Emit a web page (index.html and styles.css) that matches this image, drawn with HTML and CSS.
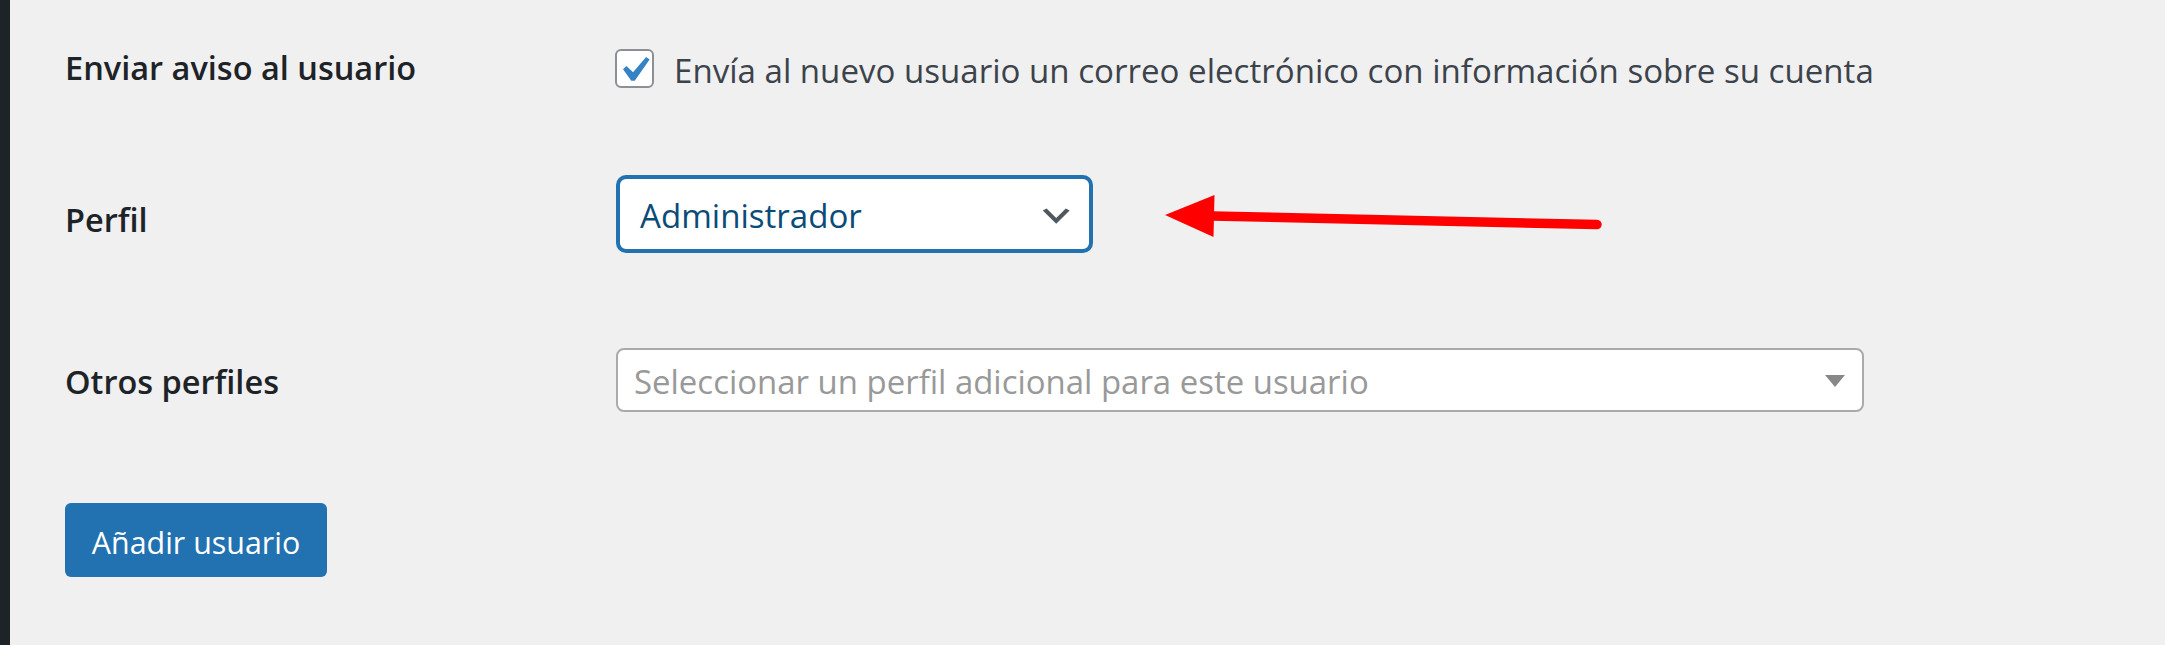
FILE: index.html
```html
<!DOCTYPE html>
<html lang="es">
<head>
<meta charset="utf-8">
<title>Añadir usuario</title>
<link rel="stylesheet" href="styles.css">
</head>
<body>
<div class="layout">
  <aside class="adminmenu"></aside>
  <main class="content">
    <form class="user-form">
      <div class="row row-notify">
        <div class="label">Enviar aviso al usuario</div>
        <div class="field field-check">
          <span class="checkbox"><svg class="checkmark" viewBox="5.78 4.89 10.39 9.32" width="26.6" height="23.9"><path d="M14.83 4.89l1.34.94-5.81 8.38H9.02L5.78 9.67l1.34-1.25 2.57 2.4z" fill="#3582c4"/></svg></span>
          <span class="check-text">Envía al nuevo usuario un correo electrónico con información sobre su cuenta</span>
        </div>
      </div>
      <div class="row row-role">
        <div class="label">Perfil</div>
        <div class="field">
          <div class="select"><span class="select-value">Administrador</span><svg class="chevron" viewBox="0 0 20 20" width="38.4" height="38.4"><path d="M5 6l5 5 5-5 2 1-7 7-7-7 2-1z" fill="#50575e"/></svg></div>
        </div>
      </div>
      <div class="row row-roles">
        <div class="label">Otros perfiles</div>
        <div class="field">
          <div class="select2"><span class="placeholder">Seleccionar un perfil adicional para este usuario</span><span class="select2-arrow"></span></div>
        </div>
      </div>
      <div class="submit"><button type="button" class="button-primary">Añadir usuario</button></div>
    </form>
  </main>
</div>
<svg class="annotation" viewBox="0 0 2165 645" width="2165" height="645">
  <line x1="1212" y1="216" x2="1597" y2="224.5" stroke="#ff0000" stroke-width="9.5" stroke-linecap="round"/>
  <polygon points="1165,215 1214.5,195 1213.5,237" fill="#ff0000"/>
</svg>
</body>
</html>
```

FILE: styles.css
```css
html, body {
  margin: 0;
  height: 100%;
}

body {
  background: #f0f0f1;
  font-family: "Open Sans", "Noto Sans", sans-serif;
  color: #3c434a;
  overflow: hidden;
}

.layout {
  display: flex;
  min-height: 645px;
}

.adminmenu {
  width: 10px;
  flex: none;
  background: #1d2327;
}

.content {
  flex: 1;
  padding: 49px 0 0 55px;
}

.row {
  display: flex;
  align-items: flex-start;
}

.label {
  width: 551px;
  flex: none;
  font-size: 32.5px;
  font-weight: 600;
  line-height: 40px;
  color: #1d2327;
}

.row-notify .label {
  margin-top: -1px;
}

.field-check {
  display: flex;
  align-items: flex-start;
  gap: 20px;
}

.checkbox {
  width: 39px;
  height: 39px;
  box-sizing: border-box;
  flex: none;
  border: 2px solid #8c8f94;
  border-radius: 6px;
  background: #fff;
  padding: 5.7px 0 0 6px;
  margin-left: -1px;
}

.checkmark {
  display: block;
}

.check-text {
  margin-top: 2px;
  font-size: 33.1px;
  line-height: 40px;
  white-space: nowrap;
}

.row-role {
  padding-top: 84px;
}

.row-role .label {
  margin-top: 24.5px;
}

.select {
  width: 477px;
  height: 78px;
  box-sizing: border-box;
  display: flex;
  align-items: center;
  padding: 7px 14px 3px 20px;
  border: 4px solid #2271b1;
  border-radius: 10px;
  background: #fff;
}

.select-value {
  font-size: 33.1px;
  line-height: 60px;
  color: #0a4b78;
}

.chevron {
  display: block;
  margin-left: auto;
}

.row-roles {
  padding-top: 95px;
}

.row-roles .label {
  margin-top: 14px;
}

.select2 {
  width: 1248px;
  height: 64px;
  box-sizing: border-box;
  display: flex;
  align-items: center;
  padding: 0 17px 0 16px;
  border: 2px solid #aaa;
  border-radius: 8px;
  background: #fff;
}

.placeholder {
  display: block;
  margin-top: 4px;
  font-size: 32.95px;
  line-height: 56px;
  color: #999;
  white-space: nowrap;
}

.select2-arrow {
  margin-left: auto;
  margin-top: 2px;
  width: 0;
  height: 0;
  border-style: solid;
  border-width: 12px 10px 0 10px;
  border-color: #888 transparent transparent transparent;
}

.submit {
  padding-top: 91px;
}

.button-primary {
  display: block;
  width: 262px;
  height: 74px;
  box-sizing: border-box;
  padding: 5px 0 0;
  border: 0;
  border-radius: 6px;
  background: #2271b1;
  color: #fff;
  font-family: inherit;
  font-size: 30.4px;
  line-height: 69px;
  text-align: center;
}

.annotation {
  position: absolute;
  top: 0;
  left: 0;
  pointer-events: none;
}
```
